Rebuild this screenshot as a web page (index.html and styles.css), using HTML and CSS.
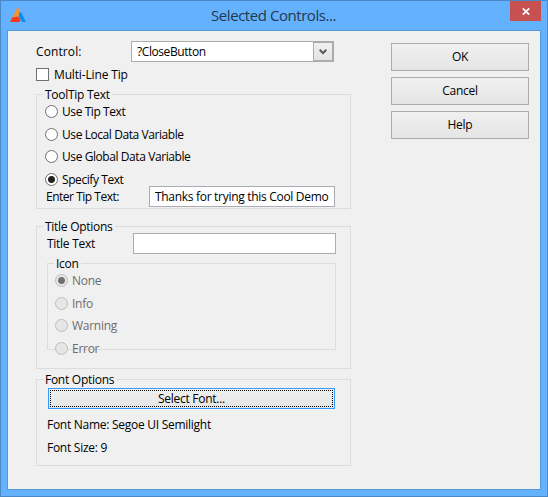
FILE: index.html
```html
<!DOCTYPE html>
<html lang="en">
<head>
<meta charset="utf-8">
<title>Selected Controls...</title>
<link rel="stylesheet" href="styles.css">
</head>
<body>
<div class="window">
  <header class="titlebar">
    <svg class="app-icon" width="16" height="14" viewBox="0 0 16 14">
      <path d="M7 0.2 L9 0.2 L9.6 4 L9 8.4 L2.2 9.8 Z" fill="#f0953c"/>
      <path d="M0 14 L2.2 9.6 L8 8.6 L10.4 11.5 L10 14 Z" fill="#fb3a14"/>
      <path d="M9.4 4.3 L11 4.3 L16 14 L12.2 14 L8.8 8.6 Z" fill="#0a8df2"/>
    </svg>
    <h1 class="title">Selected Controls...</h1>
    <button class="close" aria-label="Close"><svg width="8" height="7" viewBox="0 0 8 7"><path d="M.8 .3 L7.2 6.7 M7.2 .3 L.8 6.7" stroke="#fff" stroke-width="1.7"/></svg></button>
  </header>
  <main class="client">
    <div class="form">
      <div class="row control-row">
        <span class="lbl">Control:</span>
        <div class="combo"><span>?CloseButton</span><i class="drop"><svg width="8" height="6" viewBox="0 0 8 6"><path d="M.7 .8 L4 4.1 L7.3 .8" fill="none" stroke="#555" stroke-width="2"/></svg></i></div>
      </div>
      <label class="row check-row"><i class="box"></i><span>Multi-Line Tip</span></label>

      <section class="group tip-group">
        <h2 class="legend">ToolTip Text</h2>
        <div class="radios tight">
          <label class="radio"><i class="dot"></i><span>Use Tip Text</span></label>
          <label class="radio"><i class="dot"></i><span>Use Local Data Variable</span></label>
          <label class="radio"><i class="dot"></i><span>Use Global Data Variable</span></label>
          <label class="radio"><i class="dot on"></i><span>Specify Text</span></label>
        </div>
        <div class="row tip-row"><span class="lbl">Enter Tip Text:</span><div class="input"><span class="tip-value">Thanks for trying this Cool Demo</span></div></div>
      </section>

      <section class="group title-group">
        <h2 class="legend">Title Options</h2>
        <div class="row title-row"><span class="lbl">Title Text</span><div class="input"></div></div>
        <section class="group icon-group">
          <h2 class="legend">Icon</h2>
          <div class="radios disabled">
            <label class="radio"><i class="dot on"></i><span>None</span></label>
            <label class="radio"><i class="dot"></i><span>Info</span></label>
            <label class="radio"><i class="dot"></i><span>Warning</span></label>
            <label class="radio"><i class="dot"></i><span>Error</span></label>
          </div>
        </section>
      </section>

      <section class="group font-group">
        <h2 class="legend">Font Options</h2>
        <button class="btn select-font"><span>Select Font...</span></button>
        <p class="info name">Font Name: Segoe UI Semilight</p>
        <p class="info">Font Size: 9</p>
      </section>
    </div>
    <nav class="actions">
      <button class="btn">OK</button>
      <button class="btn">Cancel</button>
      <button class="btn">Help</button>
    </nav>
  </main>
</div>
</body>
</html>
```
FILE: styles.css
```css
* { box-sizing: border-box; }
body {
  margin: 0;
  font: 12px/16px "Open Sans", "Noto Sans", sans-serif;
  letter-spacing: -0.27px;
  color: #000;
}
h1, h2, p { margin: 0; font-weight: 400; }
button { font: inherit; letter-spacing: inherit; color: inherit; padding: 0; }
i { display: block; flex: none; }
span, p, h1, h2 { white-space: nowrap; }

.window {
  width: 548px;
  height: 497px;
  border: 1px solid #4a89c7;
  background: #64b2ff;
  display: flex;
  flex-direction: column;
  padding: 0 6px 6px;
}
.titlebar {
  height: 29px;
  flex: none;
  display: grid;
  grid-template-columns: 30px 1fr 31px;
  align-items: start;
}
.app-icon { margin: 7px 0 0 3px; }
.title {
  font-size: 15px;
  line-height: 20px;
  letter-spacing: -0.45px;
  margin: 4px 0 0 0;
  text-align: center;
  color: #24384c;
}
.close {
  width: 31px;
  height: 20px;
  border: 0;
  background: #c75050;
  display: flex;
  align-items: center;
  justify-content: center;
  padding-top: 1px;
}
.client {
  flex: 1;
  background: #f0f0f0;
  border: 1px solid #5399dc;
  display: flex;
  justify-content: space-between;
  padding: 10px 11px 0 28px;
}
.form { width: 315px; }
.row { display: flex; align-items: center; }
.lbl { flex: none; }

.control-row { height: 21px; }
.control-row .lbl { width: 95px; letter-spacing: 0.1px; }
.combo {
  width: 203px;
  height: 21px;
  border: 1px solid #acacac;
  background: #fff;
  display: flex;
  align-items: center;
  justify-content: space-between;
  padding-left: 5px;
  letter-spacing: -0.42px;
}
.drop {
  width: 20px;
  height: 19px;
  border: 1px solid #acacac;
  background: linear-gradient(#f0f0f0, #e4e4e4);
  display: flex;
  align-items: center;
  justify-content: center;
}
.check-row { height: 13px; margin-top: 6px; gap: 5px; letter-spacing: -0.15px; }
.box { width: 13px; height: 13px; border: 1px solid #707070; background: #fff; }

.group { border: 1px solid #dcdcdc; display: flex; flex-direction: column; }
.legend {
  font-size: 12px;
  line-height: 16px;
  align-self: flex-start;
  background: #f0f0f0;
  margin: -8px 0 0 6px;
  padding: 0 2px;
}
.tip-group { margin-top: 13px; height: 115px; }
.radios { display: grid; grid-template-rows: 23px 22px 23px 13px; margin: 2px 0 0 8px; }
.tight { letter-spacing: -0.42px; }
.radio { display: flex; align-items: center; gap: 4px; height: 13px; }
.dot {
  width: 13px;
  height: 13px;
  border: 1px solid #707070;
  border-radius: 50%;
  background: #fff;
}
.dot.on { background: radial-gradient(circle, #212121 3px, #fff 4px); }
.tip-row { margin: 0 0 0 9px; height: 21px; }
.tip-row .lbl { width: 103px; letter-spacing: -0.48px; }
.tip-value { letter-spacing: -0.3px; }
.input { background: #fff; border: 1px solid #abadb3; height: 21px; display: flex; align-items: center; }
.tip-row .input { width: 186px; padding-left: 5px; }

.title-group { margin-top: 17px; height: 143px; }
.title-row { margin: -2px 0 0 10px; height: 21px; }
.title-row .lbl { width: 86px; }
.title-row .input { width: 203px; }
.icon-group { margin: 9px 0 0 10px; width: 289px; height: 87px; }
.icon-group .radios { margin-left: 7px; }
.disabled { color: #6d6d6d; }
.disabled .dot { border-color: #bcbcbc; background: #e6e6e6; }
.disabled .dot.on { background: radial-gradient(circle, #707070 3px, #e6e6e6 4px); }

.font-group { margin-top: 10px; height: 87px; }
.btn {
  border: 1px solid #acacac;
  background: linear-gradient(#f0f0f0, #e5e5e5);
  text-align: center;
}
.select-font {
  margin: 0 0 0 11px;
  width: 287px;
  height: 21px;
  flex: none;
  border-color: #3399ff;
  padding: 1px;
}
.select-font span { display: block; border: 1px dotted #000; height: 17px; line-height: 15px; }
.info { margin: 7px 0 0 10px; }
.info.name { margin-top: 8px; }

.actions { display: flex; flex-direction: column; gap: 6px; padding-top: 2px; }
.actions .btn { width: 138px; height: 28px; }
```
